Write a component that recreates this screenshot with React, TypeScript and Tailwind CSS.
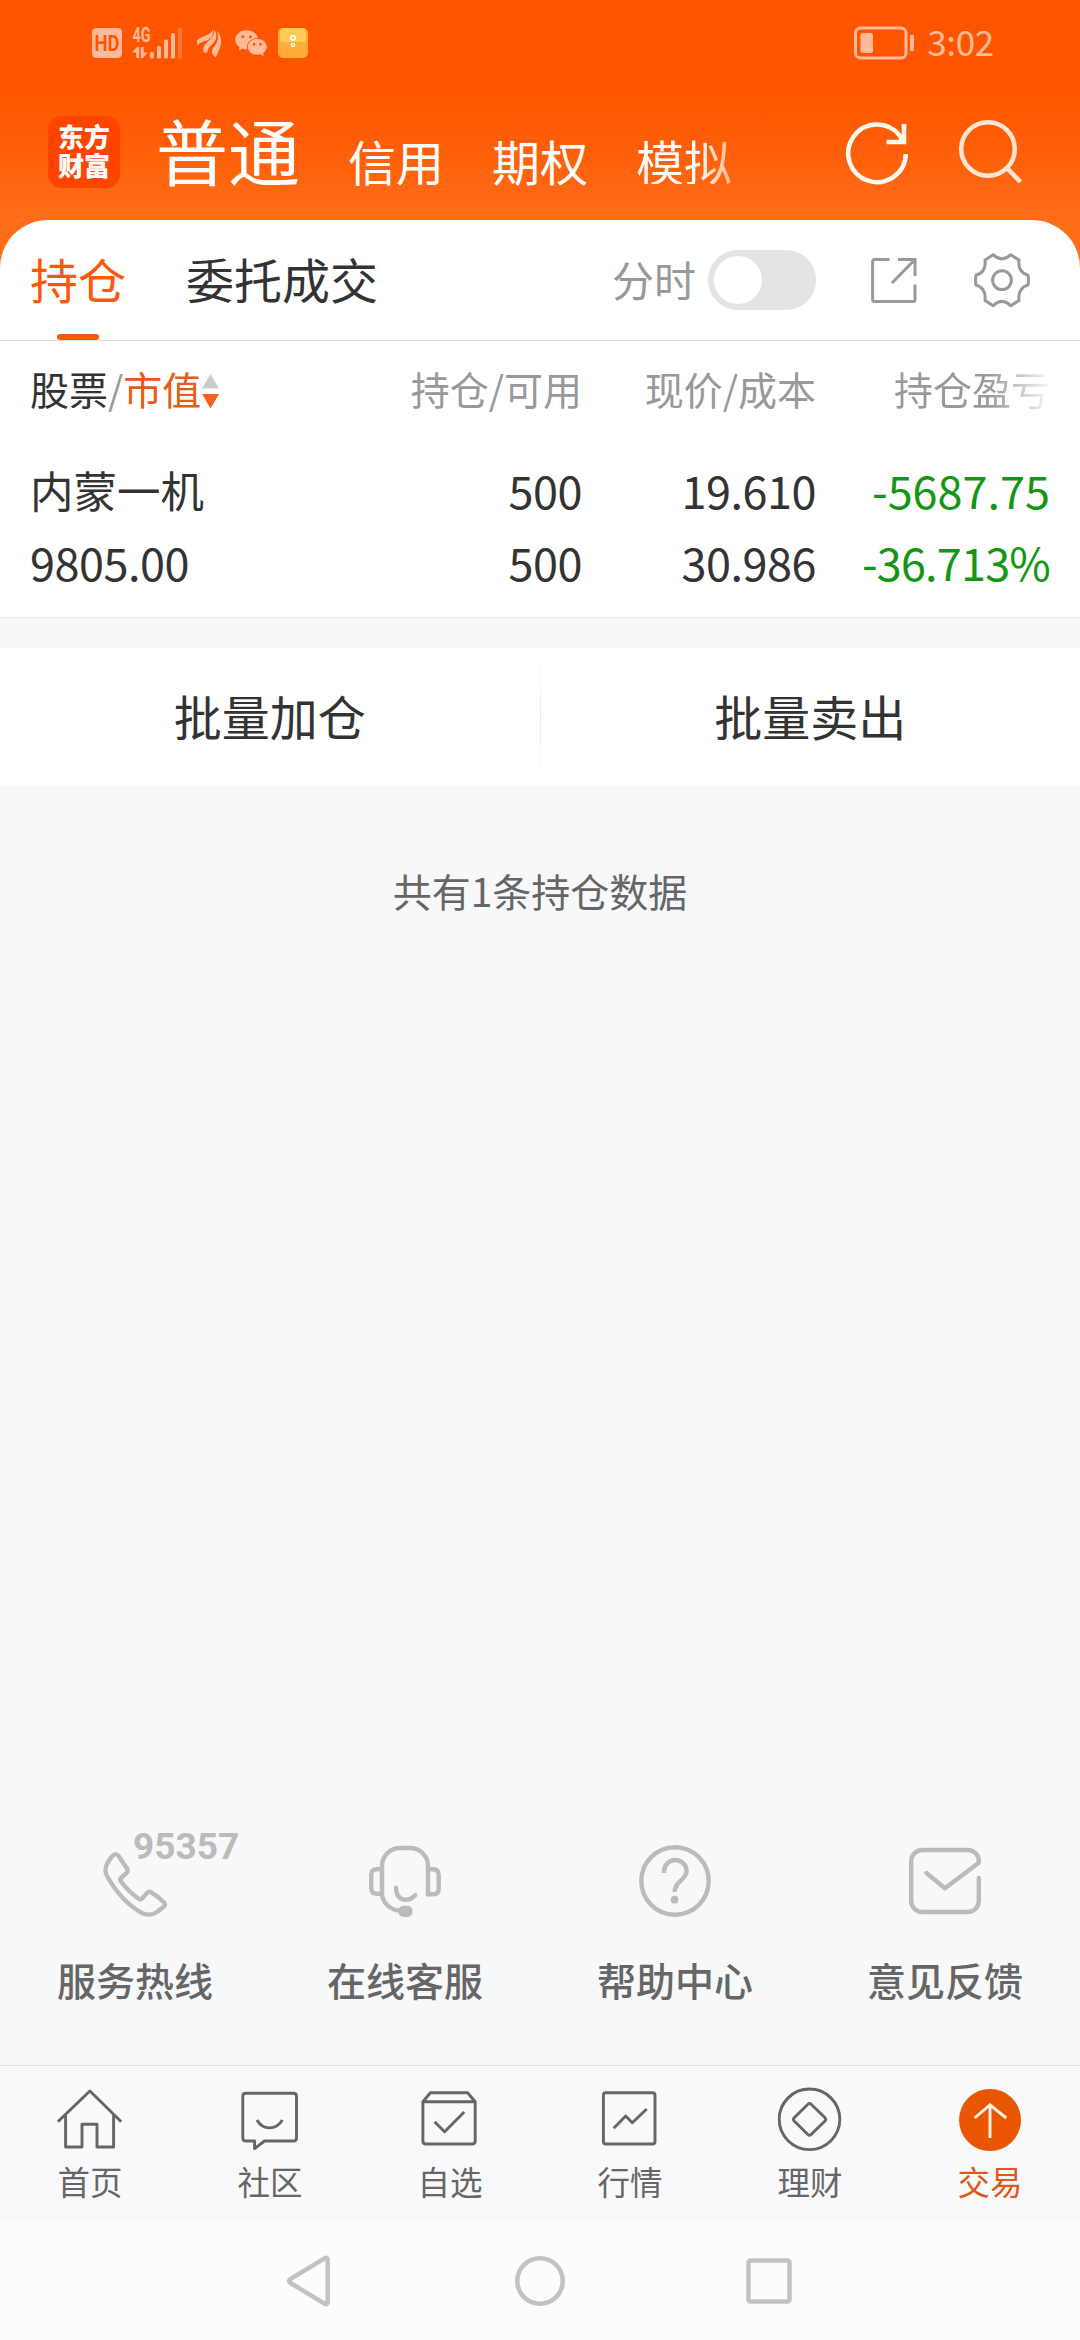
import React from 'react';
import { AiFillWechat } from 'react-icons/ai';

interface Holding {
  name: string;
  marketValue: string;
  amount: string;
  available: string;
  price: string;
  cost: string;
  profit: string;
  profitRate: string;
}

const holdings: Holding[] = [
  {
    name: '内蒙一机',
    marketValue: '9805.00',
    amount: '500',
    available: '500',
    price: '19.610',
    cost: '30.986',
    profit: '-5687.75',
    profitRate: '-36.713%',
  },
];

function StatusBar() {
  return (
    <div className="flex h-[86px] items-center justify-between pl-[92px] pr-[86px] text-[#ffbb99]">
      <div className="flex items-center">
        <svg className="h-[30px] w-[30px] overflow-visible" viewBox="0 0 30 30" fill="currentColor">
          <rect width="30" height="30" rx="4.500" />
          <text x="2.500" y="22.500" fontSize="21.500" fontWeight="700" fontFamily="Roboto, sans-serif" textLength="25" lengthAdjust="spacingAndGlyphs" fill="#ff5500">
            HD
          </text>
        </svg>
        <svg className="ml-[10px] h-[34px] w-[52px] overflow-visible" viewBox="0 0 52 34" fill="currentColor">
          <text x="0.500" y="15.500" fontSize="20" fontWeight="700" fontFamily="Roboto, sans-serif" textLength="18" lengthAdjust="spacingAndGlyphs">
            4G
          </text>
          <path d="M0 26.500L5 21H7.200V32H4.200V26.500ZM8.800 21H11.600V26.500H15.500L10.800 32H8.800Z" />
          <rect x="18" y="26" width="3.800" height="6.500" rx="1.500" />
          <rect x="25" y="20" width="4" height="12.500" rx="1.500" />
          <rect x="32" y="13.500" width="4" height="19" rx="1.500" />
          <rect x="39" y="7" width="4" height="25.500" rx="1.500" />
          <rect x="46" y="1.500" width="4" height="31" rx="1.500" opacity="0.350" />
        </svg>
        <svg className="ml-[10px] h-[30px] w-[30px]" viewBox="0 0 30 30" fill="currentColor">
          <path d="M3 12.500C7 8 16 8 18.800 2C19.500 9 16 11.500 11 13C7 14.500 5 15 3.800 17.500Q2.800 15 3 12.500Z" />
          <path d="M9.500 24C9 19.500 10 17 14 13.500C18 10 20.500 7 20.200 1.500C24 8 22 13 18 16.500C14.500 19.500 14 21 13.500 24Q11 25.500 9.500 24Z" />
          <path d="M21.500 29.500C17 26 17 22 20.500 18C24 14 25 9 22.800 2.500C28 9 28 15 26 19.500C24 23.500 24 26 21.500 29.500Z" />
        </svg>
        <AiFillWechat className="ml-[9px] h-[36px] w-[36px]" />
        <svg className="ml-[9px] h-[30px] w-[30px]" viewBox="0 0 30 30" fill="none">
          <rect width="30" height="30" rx="5" fill="#ffac3d" />
          <path d="M2 3Q3 0 6 0H24Q27 0 28 3V11Q28 14 25 14H5Q2 14 2 11Z" fill="#ffcb57" />
          <circle cx="15" cy="10" r="2.200" stroke="#fff" strokeWidth="1.600" />
          <circle cx="15" cy="17" r="1.600" stroke="#fff" strokeWidth="1.400" />
        </svg>
      </div>
      <div className="flex items-center gap-[11px]">
        <svg className="h-[34px] w-[62px]" viewBox="0 0 62 34" fill="none">
          <rect x="1.500" y="2" width="50.500" height="30" rx="5" stroke="currentColor" strokeWidth="3" />
          <rect x="6.500" y="7" width="12.500" height="20" rx="2.500" fill="currentColor" />
          <rect x="56" y="8.500" width="4" height="17" rx="2" fill="currentColor" />
        </svg>
        <span className="pb-[5px] text-[35px] leading-none tracking-[-0.3px]">3:02</span>
      </div>
    </div>
  );
}

function Header() {
  return (
    <div className="flex h-[134px] items-start justify-between pl-12 pr-[53px]">
      <div className="flex items-start">
        <div className="mt-[30px] h-[72px] w-[72px] rounded-[14px] bg-[#ff4400] px-[10px] pt-[5px] text-[26px] font-black leading-[29px] text-white">
          东方财富
        </div>
        <span className="ml-9 mt-[27px] text-[72px] leading-[72px] text-white">普通</span>
        <div className="ml-12 mt-[50px] flex gap-12 text-[48px] leading-[48px] text-white">
          <span>信用</span>
          <span>期权</span>
          <span className="bg-gradient-to-r from-white from-60% to-[#ffb68c] bg-clip-text text-transparent">模拟</span>
        </div>
      </div>
      <div className="mt-[31px] flex">
        <svg className="h-[72px] w-[72px]" viewBox="0 0 72 72" fill="none" stroke="#fffaf0" strokeWidth="4.500">
          <path d="M64.800 37A28.800 28.800 0 1 1 59 19L62 25" />
          <path d="M63 7V25H45.500" />
        </svg>
        <svg className="ml-[42px] h-[72px] w-[72px]" viewBox="0 0 72 72" fill="none" stroke="#ffe6d2" strokeWidth="4.500">
          <circle cx="33" cy="32" r="26.800" />
          <path d="M52 51L65.500 65" />
        </svg>
      </div>
    </div>
  );
}

function TabBar() {
  return (
    <div className="flex h-[121px] items-center justify-between border-b border-[#dcdddf] pl-[30px] pr-12">
      <div className="flex h-full gap-[60px] text-[48px] leading-[116px]">
        <div className="relative text-[#fa580c]">
          持仓
          <span className="absolute bottom-0 left-[27px] h-[6px] w-[42px] rounded-full bg-[#fa580c]" />
        </div>
        <div className="text-[#333]">委托成交</div>
      </div>
      <div className="flex items-center text-[#999]">
        <span className="pb-[2px] text-[42px] leading-none">分时</span>
        <span className="ml-3 flex h-[60px] w-[108px] items-center rounded-full bg-[#e4e4e6] p-[6px]">
          <span className="h-12 w-12 rounded-full bg-white" />
        </span>
        <svg className="ml-[54px] h-12 w-12" viewBox="0 0 48 48" fill="none" stroke="currentColor" strokeWidth="3">
          <path d="M19.500 3.500H4.600Q2.600 3.500 2.600 5.500V43.500Q2.600 45.500 4.600 45.500H43Q45 45.500 45 43.500V28.500" />
          <path d="M28 3.500H45V20M22 27L45 3.500" />
        </svg>
        <svg className="ml-[54px] h-[60px] w-[60px]" viewBox="0 0 60 60" fill="none" stroke="currentColor" strokeWidth="3" strokeLinejoin="round">
          <path d="M21.200 4.700Q30 13 38.700 4.700L47 10C46 18 49 23 56 25.300Q57 30 56 35C49 37 46 42 47 50.500L38.700 55.700Q30 47 21.200 55.700L13 50.500C14 42 11 37 4 35Q3 30 4 25.300C11 23 14 18 13 10Z" />
          <circle cx="30" cy="30.200" r="9.400" />
        </svg>
      </div>
    </div>
  );
}

function HoldingTable() {
  return (
    <div className="h-[277px] border-b border-[#e8eaec] px-[30px]">
      <div className="flex h-[97px] items-center pb-[2px] text-[39px] leading-none text-[#999]">
        <div className="flex flex-1 items-center">
          <span className="text-[#333]">股票</span>
          <span>/</span>
          <span className="text-[#ea5a14]">市值</span>
          <svg className="ml-[1px] mt-[5px] h-[36px] w-[17px]" viewBox="0 0 16 36" preserveAspectRatio="none">
            <path d="M8 1L16 15.500H0Z" fill="#ccc" />
            <path d="M0 21H16L8 35.500Z" fill="#f5601a" />
          </svg>
        </div>
        <div className="text-right">持仓/可用</div>
        <div className="w-[234px] text-right">现价/成本</div>
        <div className="w-[234px] text-right">
          <span className="bg-gradient-to-r from-[#999] from-60% to-[#f8f8f8] bg-clip-text text-transparent">持仓盈亏</span>
        </div>
      </div>
      {holdings.map((item) => (
        <div key={item.name} className="flex pt-4 text-[45px] leading-[72px] tracking-[-0.5px] text-[#333]">
          <div className="flex-1">
            <div className="text-[43.5px] tracking-normal">{item.name}</div>
            <div>{item.marketValue}</div>
          </div>
          <div className="text-right">
            <div>{item.amount}</div>
            <div>{item.available}</div>
          </div>
          <div className="w-[234px] text-right">
            <div>{item.price}</div>
            <div>{item.cost}</div>
          </div>
          <div className="w-[234px] text-right text-[#149614]">
            <div className="tracking-normal">{item.profit}</div>
            <div className="tracking-[-0.8px]">{item.profitRate}</div>
          </div>
        </div>
      ))}
    </div>
  );
}

const services = [
  {
    label: '服务热线',
    icon: (
      <path d="M13 11.500Q16.400 7 19.500 11L28 23.500Q29.500 26 27.500 28L22 33Q20.500 34.700 22 36.500Q30 47 40 54Q41.500 55 43 53.500L48 48Q49.800 46 52 47.200Q59 51.500 65 57.500Q67 59.700 65 61.500L58 67Q50.500 72 42 67.500Q22 56 8 31Q5 25 8 19Q10 15 13 11.500Z" />
    ),
    badge: '95357',
  },
  {
    label: '在线客服',
    icon: (
      <>
        <path d="M59 49.300V21A18 18 0 0 0 41 3H31A18 18 0 0 0 13 21V48C13 57 21 65.700 32 65.700" />
        <path d="M59 24.300H64Q69.700 24.300 69.700 30V43.500Q69.700 49.300 64 49.300H59M13 24.300H7.500Q2.200 24.300 2.200 30V43Q2.200 48.700 7.500 48.700H13" />
        <path d="M27 42.700C27 56 39 58 46.300 50" />
        <rect x="29.400" y="60.700" width="14.100" height="11.300" rx="5" fill="currentColor" stroke="none" />
      </>
    ),
  },
  {
    label: '帮助中心',
    icon: (
      <>
        <circle cx="36" cy="36" r="33.700" />
        <path strokeLinecap="butt" d="M25 28V26.500A11.300 11.300 0 0 1 47.600 26C47.600 35 35.600 36 35.600 47" />
        <circle cx="35.600" cy="54.700" r="3.900" fill="currentColor" stroke="none" />
      </>
    ),
  },
  {
    label: '意见反馈',
    icon: (
      <path d="M69.800 33V56A11 11 0 0 1 58.800 67H13.200A11 11 0 0 1 2.200 56V16A11 11 0 0 1 13.200 5H58.800A11 11 0 0 1 69.800 16V17.700L36 43.300L17.400 28" />
    ),
  },
];

function ServiceBar() {
  return (
    <div className="grid h-[220px] grid-cols-4">
      {services.map((service) => (
        <div key={service.label} className="flex flex-col items-center">
          <div className="relative h-[72px] w-[72px] text-[#bbb]">
            <svg className="h-full w-full" viewBox="0 0 72 72" fill="none" stroke="currentColor" strokeWidth="4.400" strokeLinecap="round" strokeLinejoin="round">
              {service.icon}
            </svg>
            {service.badge && (
              <span className="absolute left-[34px] top-[-17px] font-['Roboto',sans-serif] text-[37px] font-bold leading-[37px]">
                {service.badge}
              </span>
            )}
          </div>
          <span className="mt-[43px] text-[39px] font-medium leading-[39px] text-[#666]">{service.label}</span>
        </div>
      ))}
    </div>
  );
}

const navItems = [
  {
    label: '首页',
    icon: (
      <>
        <path d="M0.900 34.700L32.900 4L64.200 34.700" />
        <path d="M8.600 28V60H25V37.300H40V60H56.600V28" />
      </>
    ),
  },
  {
    label: '社区',
    icon: (
      <>
        <path d="M8.800 6.300H56.500Q59.500 6.300 59.500 9.300V51Q59.500 54 56.500 54H27.500L17.600 61.500V54H8.800Q5.800 54 5.800 51V9.300Q5.800 6.300 8.800 6.300Z" />
        <path d="M19.900 33C26 43.500 39 43.500 45.400 33" />
      </>
    ),
  },
  {
    label: '自选',
    icon: (
      <>
        <path d="M5.900 14.700V54Q5.900 57 8.900 57H55.200Q58.200 57 58.200 54V14.700L50.600 5.700H13.400L5.900 14.700H58.200" />
        <path d="M17.600 34.700L27.600 44.700L47.200 25" />
      </>
    ),
  },
  {
    label: '行情',
    icon: (
      <>
        <rect x="6.400" y="5.700" width="51.600" height="51.300" rx="2.500" />
        <path d="M16.700 41.300L28.700 29L35.300 35.700L49.700 22" />
      </>
    ),
  },
  {
    label: '理财',
    icon: (
      <>
        <circle cx="32.500" cy="32.300" r="30.300" />
        <path d="M30.900 17.300Q32.500 15.500 34.100 17.300L48 30.700Q49.500 32.300 48 34L34.100 47.500Q32.500 49.200 30.900 47.500L17.200 34Q15.700 32.300 17.200 30.700Z" />
      </>
    ),
  },
  {
    label: '交易',
    active: true,
    icon: (
      <>
        <circle cx="33" cy="33" r="31" fill="#ea5500" stroke="none" />
        <path stroke="#fff3e2" strokeLinejoin="miter" d="M33 51V18M17.600 31L33 18L49.300 31" />
      </>
    ),
  },
];

function BottomNav() {
  return (
    <div className="grid h-[157px] grid-cols-6 border-t border-[#dfe1e3] bg-[#f9f9fb]">
      {navItems.map((item) => (
        <div key={item.label} className={`flex flex-col items-center pt-[21px] ${item.active ? 'text-[#dc5a1a]' : 'text-[#666]'}`}>
          <svg className="h-[66px] w-[66px]" viewBox="0 0 66 66" fill="none" stroke="currentColor" strokeWidth="2.900" strokeLinejoin="round">
            {item.icon}
          </svg>
          <span className="mt-3 text-[32.5px] leading-[32px]">{item.label}</span>
        </div>
      ))}
    </div>
  );
}

function SystemNav() {
  return (
    <div className="flex h-[118px] items-center justify-center bg-[#fcfcfc]">
      <svg className="h-[54px] w-[510px]" viewBox="0 0 510 54" fill="none" stroke="#c2c2c2" strokeWidth="4.500" strokeLinejoin="round">
        <path d="M39.500 4.300Q42.700 2.800 42.700 6V48Q42.700 51.200 39.500 49.700L5.500 29Q2.500 27 5.500 25Z" />
        <circle cx="255" cy="27" r="22.700" />
        <rect x="463.500" y="6.500" width="41" height="41" rx="2" />
      </svg>
    </div>
  );
}

export default function App() {
  return (
    <div className="flex h-[2340px] w-[1080px] flex-col overflow-hidden bg-[#f7f8fa] font-['Noto_Sans_CJK_SC',sans-serif]">
      <div className="bg-[linear-gradient(180deg,#ff5500_0px,#ff5500_95px,#ff6d18_220px)]">
        <StatusBar />
        <Header />
        <div className="rounded-t-[48px] bg-white">
          <TabBar />
          <HoldingTable />
        </div>
      </div>

      <div className="mt-[30px] flex h-[138px] items-center bg-white text-center text-[48px] leading-none text-[#333]">
        <div className="flex-1 pb-1">批量加仓</div>
        <div className="h-full w-px bg-gradient-to-b from-white via-[#ececec] to-white" />
        <div className="flex-1 pb-1">批量卖出</div>
      </div>
      <div className="mt-[85px] flex-1 text-center text-[39px] leading-[39px] text-[#666]">共有1条持仓数据</div>

      <ServiceBar />
      <BottomNav />
      <SystemNav />
    </div>
  );
}
